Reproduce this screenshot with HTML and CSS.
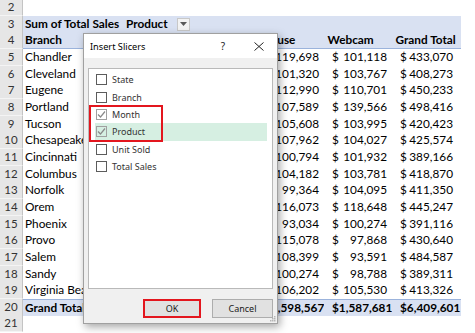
FILE: index.html
```html
<!DOCTYPE html>
<html>
<head>
<meta charset="utf-8">
<link rel="stylesheet" href="styles.css">
</head>
<body>
<div class="sheet">
  <div class="row"><div class="rh">2</div></div>
  <div class="row r3"><div class="rh">3</div><div class="x hb b nm">Sum of Total Sales</div><div class="x hb b prod"><span>Product</span><span class="dd"><svg width="7" height="4" viewBox="0 0 7 4"><path d="M0 0H7L3.5 4Z" fill="#595959"/></svg></span></div><div class="x hb"></div><div class="x hb"></div><div class="x hb"></div><div class="x hb"></div></div>
  <div class="row r4"><div class="rh">4</div><div class="x hb b nm">Branch</div><div class="x hb"></div><div class="x hb"></div><div class="x hb b hd">Mouse</div><div class="x hb b hd">Webcam</div><div class="x hb b hd">Grand Total</div></div>
  <div class="row"><div class="rh">5</div><div class="x nm">Chandler</div><div class="x"></div><div class="x"></div><div class="x acc"><span>$</span><span>119,698</span></div><div class="x acc"><span>$</span><span>101,118</span></div><div class="x acc"><span>$</span><span>433,070</span></div></div>
  <div class="row"><div class="rh">6</div><div class="x nm">Cleveland</div><div class="x"></div><div class="x"></div><div class="x acc"><span>$</span><span>101,320</span></div><div class="x acc"><span>$</span><span>103,767</span></div><div class="x acc"><span>$</span><span>408,273</span></div></div>
  <div class="row"><div class="rh">7</div><div class="x nm">Eugene</div><div class="x"></div><div class="x"></div><div class="x acc"><span>$</span><span>112,990</span></div><div class="x acc"><span>$</span><span>110,701</span></div><div class="x acc"><span>$</span><span>450,233</span></div></div>
  <div class="row"><div class="rh">8</div><div class="x nm">Portland</div><div class="x"></div><div class="x"></div><div class="x acc"><span>$</span><span>107,589</span></div><div class="x acc"><span>$</span><span>139,566</span></div><div class="x acc"><span>$</span><span>498,416</span></div></div>
  <div class="row"><div class="rh">9</div><div class="x nm">Tucson</div><div class="x"></div><div class="x"></div><div class="x acc"><span>$</span><span>105,608</span></div><div class="x acc"><span>$</span><span>103,995</span></div><div class="x acc"><span>$</span><span>420,423</span></div></div>
  <div class="row"><div class="rh">10</div><div class="x nm">Chesapeake</div><div class="x"></div><div class="x"></div><div class="x acc"><span>$</span><span>107,962</span></div><div class="x acc"><span>$</span><span>104,027</span></div><div class="x acc"><span>$</span><span>425,574</span></div></div>
  <div class="row"><div class="rh">11</div><div class="x nm">Cincinnati</div><div class="x"></div><div class="x"></div><div class="x acc"><span>$</span><span>100,794</span></div><div class="x acc"><span>$</span><span>101,932</span></div><div class="x acc"><span>$</span><span>389,166</span></div></div>
  <div class="row"><div class="rh">12</div><div class="x nm">Columbus</div><div class="x"></div><div class="x"></div><div class="x acc"><span>$</span><span>104,182</span></div><div class="x acc"><span>$</span><span>103,781</span></div><div class="x acc"><span>$</span><span>418,870</span></div></div>
  <div class="row"><div class="rh">13</div><div class="x nm">Norfolk</div><div class="x"></div><div class="x"></div><div class="x acc"><span>$</span><span>99,364</span></div><div class="x acc"><span>$</span><span>104,095</span></div><div class="x acc"><span>$</span><span>411,350</span></div></div>
  <div class="row"><div class="rh">14</div><div class="x nm">Orem</div><div class="x"></div><div class="x"></div><div class="x acc"><span>$</span><span>116,073</span></div><div class="x acc"><span>$</span><span>118,648</span></div><div class="x acc"><span>$</span><span>445,247</span></div></div>
  <div class="row"><div class="rh">15</div><div class="x nm">Phoenix</div><div class="x"></div><div class="x"></div><div class="x acc"><span>$</span><span>93,034</span></div><div class="x acc"><span>$</span><span>100,274</span></div><div class="x acc"><span>$</span><span>391,116</span></div></div>
  <div class="row"><div class="rh">16</div><div class="x nm">Provo</div><div class="x"></div><div class="x"></div><div class="x acc"><span>$</span><span>115,078</span></div><div class="x acc"><span>$</span><span>97,868</span></div><div class="x acc"><span>$</span><span>430,640</span></div></div>
  <div class="row"><div class="rh">17</div><div class="x nm">Salem</div><div class="x"></div><div class="x"></div><div class="x acc"><span>$</span><span>108,399</span></div><div class="x acc"><span>$</span><span>93,591</span></div><div class="x acc"><span>$</span><span>484,587</span></div></div>
  <div class="row"><div class="rh">18</div><div class="x nm">Sandy</div><div class="x"></div><div class="x"></div><div class="x acc"><span>$</span><span>100,274</span></div><div class="x acc"><span>$</span><span>98,788</span></div><div class="x acc"><span>$</span><span>389,311</span></div></div>
  <div class="row"><div class="rh">19</div><div class="x nm">Virginia Beach</div><div class="x"></div><div class="x"></div><div class="x acc"><span>$</span><span>106,202</span></div><div class="x acc"><span>$</span><span>105,530</span></div><div class="x acc"><span>$</span><span>413,326</span></div></div>
  <div class="row r20"><div class="rh">20</div><div class="x hb b nm">Grand Total</div><div class="x hb"></div><div class="x hb"></div><div class="x hb b acc"><span>$</span><span>1,598,567</span></div><div class="x hb b acc"><span>$</span><span>1,587,681</span></div><div class="x hb b acc"><span>$</span><span>6,409,601</span></div></div>
  <div class="row"><div class="rh">21</div></div>
</div>

<div class="dialog">
  <div class="titlebar">
    <span class="title">Insert Slicers</span>
    <span class="help">?</span>
    <svg class="close" width="10" height="9" viewBox="0 0 10 9"><path d="M0.5 0.5L9.5 8.5M9.5 0.5L0.5 8.5" stroke="#222" stroke-width="1" fill="none"/></svg>
  </div>
  <div class="dbody">
    <div class="list">
      <div class="item"><span class="cb"></span><span>State</span></div>
      <div class="item"><span class="cb"></span><span>Branch</span></div>
      <div class="item"><span class="cb on"><svg width="9" height="9" viewBox="0 0 9 9"><path d="M1 4.5L3.5 7L8 1.5" stroke="#8a8a8a" stroke-width="1.2" fill="none"/></svg></span><span>Month</span></div>
      <div class="item sel"><span class="cb on"><svg width="9" height="9" viewBox="0 0 9 9"><path d="M1 4.5L3.5 7L8 1.5" stroke="#8a8a8a" stroke-width="1.2" fill="none"/></svg></span><span>Product</span></div>
      <div class="item"><span class="cb"></span><span>Unit Sold</span></div>
      <div class="item"><span class="cb"></span><span>Total Sales</span></div>
    </div>
    <div class="footer">
      <button class="btn ok">OK</button>
      <button class="btn">Cancel</button>
    </div>
  </div>
  <div class="redbox"></div>
  <svg class="grip" width="6" height="6" viewBox="0 0 6 6"><g fill="#b5b5b5"><rect x="4" y="0" width="1.5" height="1.5"/><rect x="2" y="2" width="1.5" height="1.5"/><rect x="4" y="2" width="1.5" height="1.5"/><rect x="0" y="4" width="1.5" height="1.5"/><rect x="2" y="4" width="1.5" height="1.5"/><rect x="4" y="4" width="1.5" height="1.5"/></g></svg>
</div>
</body>
</html>
```

FILE: styles.css
```css
html, body {
  margin: 0;
  width: 475px;
  height: 333px;
  overflow: hidden;
  background: #fff;
}

.sheet {
  margin-top: -1px;
  font-family: Lato, "Liberation Sans", sans-serif;
  font-size: 11.8px;
  color: #000;
}

.row {
  display: grid;
  grid-template-columns: 23px 101px 68px 64px 68px 68px 69px 1fr;
  height: 16.667px;
  line-height: 16px;
}

.rh {
  background: #e6e6e6;
  border-right: 1px solid #c4c4c4;
  border-bottom: 1px solid #f4f4f4;
  box-sizing: border-box;
  text-align: center;
  color: #333;
  font-size: 11.5px;
}

.x {
  white-space: nowrap;
  box-sizing: border-box;
  overflow: visible;
}

.hb { background: #d9e1f2; }
.b { font-weight: bold; }
.nm { padding-left: 2px; }
.hd { padding-left: 3.5px; }

.r4 .x { border-bottom: 1px solid #9bb3dc; }
.r20 .x { border-top: 1px solid #9bb3dc; }

.prod {
  display: flex;
  align-items: center;
  justify-content: space-between;
  padding: 0 2px 0 2px;
}

.dd {
  width: 13px;
  height: 13px;
  box-sizing: border-box;
  border: 1px solid #c8c8c8;
  background: #f3f3f3;
  display: flex;
  align-items: center;
  justify-content: center;
}

.acc {
  display: flex;
  justify-content: space-between;
  padding: 0 5px 0 8px;
}
.x.acc:nth-child(7) { padding-right: 8px; }

/* dialog */
.dialog {
  position: absolute;
  left: 83px;
  top: 33px;
  width: 195px;
  height: 291px;
  box-sizing: border-box;
  border: 1px solid #a0a0a0;
  background: #f0f0f0;
  box-shadow: 2px 3px 8px rgba(0, 0, 0, 0.35);
  font-family: "Noto Sans", "Open Sans", sans-serif;
  font-size: 9px;
  color: #1a1a1a;
  display: flex;
  flex-direction: column;
}

.titlebar {
  height: 24px;
  background: #fff;
  display: flex;
  align-items: center;
  padding-left: 6px;
  flex: none;
}

.title { flex: 1; font-size: 9.2px; color: #000; }

.help {
  font-size: 10px;
  margin-right: 29px;
  color: #222;
}

.close { margin-right: 13px; }

.dbody {
  flex: 1;
  display: flex;
  flex-direction: column;
  padding: 10px 4px 0 4px;
}

.list {
  height: 221px;
  box-sizing: border-box;
  background: #fff;
  border: 1px solid #b9b9b9;
  padding-top: 2px;
}

.item {
  height: 17.4px;
  display: flex;
  align-items: center;
  margin: 0 5px 0 6px;
  padding-left: 1px;
  color: #333;
}

.item.sel { background: #d6efe2; }

.cb {
  width: 11px;
  height: 11px;
  box-sizing: border-box;
  border: 1px solid #5c5c5c;
  background: #fff;
  margin-right: 5px;
  display: flex;
  align-items: center;
  justify-content: center;
  flex: none;
}

.cb.on { border-color: #a0a0a0; }
.item.sel .cb { background: transparent; }

.footer {
  display: flex;
  justify-content: flex-end;
  gap: 11px;
  margin-top: 10px;
}

.btn {
  height: 19px;
  box-sizing: border-box;
  border: 1px solid #adadad;
  background: #e1e1e1;
  font-family: "Noto Sans", "Open Sans", sans-serif;
  font-size: 9px;
  color: #1a1a1a;
  padding: 0;
  width: 61px;
}

.btn.ok {
  width: 58px;
  border: 2px solid #e3161e;
}

.redbox {
  position: absolute;
  left: 5px;
  top: 71px;
  width: 74px;
  height: 37px;
  box-sizing: border-box;
  border: 2px solid #e3161e;
}

.grip {
  position: absolute;
  right: 1px;
  bottom: 1px;
}
```
